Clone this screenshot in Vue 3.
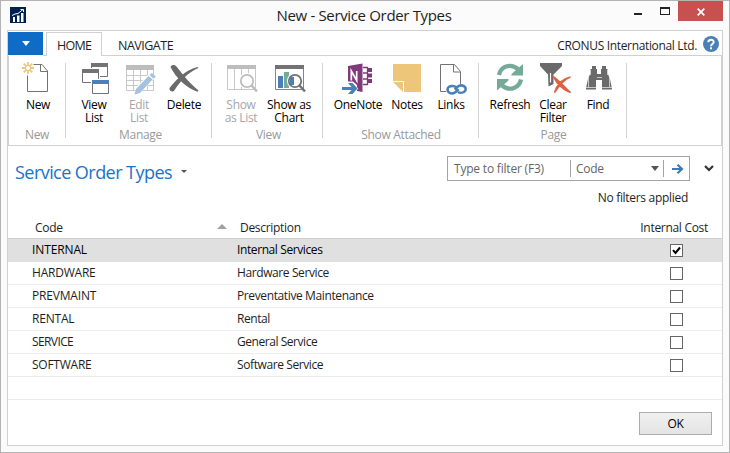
<script setup>
import { ref } from 'vue'

const rows = ref([
  { code: 'INTERNAL', description: 'Internal Services', internal: true, codeGap: -0.12, gap: -0.4 },
  { code: 'HARDWARE', description: 'Hardware Service', internal: false, codeGap: -0.22, gap: -0.4 },
  { code: 'PREVMAINT', description: 'Preventative Maintenance', internal: false, codeGap: -0.18, gap: -0.38 },
  { code: 'RENTAL', description: 'Rental', internal: false, codeGap: -0.2, gap: -0.45 },
  { code: 'SERVICE', description: 'General Service', internal: false, codeGap: -0.6, gap: -0.45 },
  { code: 'SOFTWARE', description: 'Software Service', internal: false, codeGap: -0.25, gap: -0.4 },
])
</script>

<template>
  <div class="window">
    <header class="titlebar">
      <svg class="app-icon" viewBox="0 0 16 16" width="16" height="16">
        <rect width="16" height="16" fill="#00204f" />
        <path d="M3 10h2v5H3zM7 8.500h2.500v6.500H7zM11 6h2.500v9H11z" fill="#fff" />
        <path d="M2 8.500L5 7l3-.5L13 2.500M10.500 2.500H13.500V5" fill="none" stroke="#fff" stroke-width="1" />
      </svg>
      <h1 class="window-title">New - Service Order Types</h1>
      <div class="controls">
        <svg class="min-max" viewBox="622 1 56 20" width="56" height="20">
          <rect x="634" y="13" width="8" height="2" fill="#222" />
          <path d="M660 7h10v8h-10zM661 9v5h8V9z" fill="#222" fill-rule="evenodd" />
        </svg>
        <button class="close">
          <svg viewBox="0 0 8 8" width="8" height="8"><path d="M.7.700l6.600 6.600M7.300.7L.7 7.300" stroke="#fff" stroke-width="1.700" /></svg>
        </button>
      </div>
    </header>

    <main class="panel">
      <nav class="tabs">
        <button class="file-tab"><i class="caret"></i></button>
        <span class="tab-gap"></span>
        <span class="tab active"><b class="t-home">HOME</b></span>
        <span class="tab rest">
          <b class="t-nav">NAVIGATE</b>
          <span class="company">CRONUS International Ltd.</span>
          <svg class="help" viewBox="0 0 16 16" width="16" height="16">
            <circle cx="8" cy="8" r="8" fill="#4a7fb8" />
            <path d="M5.300 6.200C5.300 2.900 10.700 2.900 10.700 6.100C10.700 7.900 8 8 8 10.200" fill="none" stroke="#fff" stroke-width="2" />
            <rect x="7" y="11.300" width="2" height="2" fill="#fff" />
          </svg>
        </span>
      </nav>

      <section class="ribbon">
        <div class="group g-new">
          <div class="buttons">
            <button class="tool w48">
              <svg viewBox="21 61 34 34">
                <path d="M33.500 64.500H42L47.500 71V91.500H27.500V75.500" fill="none" stroke="#737373" />
                <path d="M40.500 64.500V71.500H47.500" fill="none" stroke="#737373" />
                <g stroke="#edc67a" stroke-width="1.800"><path d="M28 62v3.500M28 70.500V74M22 68h3.500M30.500 68H34M23.700 63.700l2.500 2.500M29.800 69.800l2.500 2.500M32.300 63.700l-2.500 2.500M26.200 69.800l-2.500 2.500" /></g>
                <circle cx="28" cy="68" r="2.600" fill="none" stroke="#edc67a" stroke-width="1.200" />
              </svg>
              <span>New</span>
            </button>
          </div>
          <span class="group-label">New</span>
        </div>
        <div class="group g-manage">
          <div class="buttons">
            <button class="tool w44">
              <svg viewBox="77 61 34 34">
                <path d="M91.500 63.500h16v13h-16z" fill="#fff" stroke="#737373" /><path d="M91 63h17v4H91z" fill="#737373" />
                <path d="M81 68h19v16H81z" fill="#fff" />
                <path d="M82.500 69.500h16v13h-16z" fill="#fff" stroke="#737373" /><path d="M82 69h17v4H82z" fill="#737373" />
                <path d="M91 79h19v16H91z" fill="#fff" />
                <path d="M92.500 80.500h16v13h-16z" fill="#fff" stroke="#737373" /><path d="M92 80h17v4H92z" fill="#4a7fb8" />
              </svg>
              <span>View<br>List</span>
            </button>
            <button class="tool w46 disabled">
              <svg viewBox="122 61 34 34">
                <path d="M126 65h28v5h-28z" fill="#bdbdbd" />
                <path d="M126.500 70v20.500h27V70M126.500 75.500h27M126.500 80.500h27M126.500 85.500h27M133.500 70v20M140.500 70v20M147.500 70v20" fill="none" stroke="#c8c8c8" />
                <path d="M134 95l2.500-8 14-14.500 5.500 4.500-14.500 14.500z" fill="#fff" />
                <path d="M134.500 94.500l1.500-5.500 12.500-13 4 3.500-12.500 13.500zM149.500 75l2.300-2 4 3.500-2.300 2.200z" fill="#a4c1e0" />
              </svg>
              <span>Edit<br>List</span>
            </button>
            <button class="tool w44">
              <svg viewBox="167 61 34 34">
                <path d="M170.500 67C172 64.500 174.500 64.500 176.500 66.500C181 72 187 81 198.500 90.500L197.500 91.800C186 87.500 176 78 170.500 67Z" fill="#6a6a6a" />
                <path d="M198.500 68C188 72.500 181 80 174 91C171.500 92.200 169 90.500 169.500 88C175 81 185 70 197.500 67Z" fill="#6a6a6a" />
              </svg>
              <span>Delete</span>
            </button>
          </div>
          <span class="group-label">Manage</span>
        </div>
        <div class="group g-view">
          <div class="buttons">
            <button class="tool w46 disabled">
              <svg viewBox="224 61 34 34">
                <path d="M227 65h29v4h-29z" fill="#bdbdbd" />
                <path d="M227.500 69v20.500h28V69M234.500 69v20M241.500 69v20M248.500 69v20" fill="none" stroke="#c8c8c8" />
                <circle cx="247" cy="81" r="8" fill="#fff" />
                <circle cx="247" cy="81" r="6.200" fill="#fff" stroke="#bdbdbd" stroke-width="1.800" />
                <path d="M251.500 85.500l5.500 6" stroke="#bdbdbd" stroke-width="2.500" />
              </svg>
              <span>Show<br>as List</span>
            </button>
            <button class="tool w50">
              <svg viewBox="272 61 34 34">
                <path d="M275 65h29v4h-29z" fill="#737373" />
                <path d="M275.500 69v20.500h28V69" fill="none" stroke="#858585" />
                <path d="M278 76h5v12h-5z" fill="#4a7fb8" /><path d="M284 72h5v16h-5z" fill="#75aa98" />
                <circle cx="295" cy="81" r="8" fill="#fff" /><path d="M290 77h4v8h-4z" fill="#4a7fb8" />
                <circle cx="295" cy="81" r="6.200" fill="none" stroke="#737373" stroke-width="1.800" />
                <path d="M299.500 85.500l5.500 6" stroke="#737373" stroke-width="2.500" />
              </svg>
              <span>Show as<br>Chart</span>
            </button>
          </div>
          <span class="group-label">View</span>
        </div>
        <div class="group g-attached">
          <div class="buttons">
            <button class="tool w58">
              <svg viewBox="341 61 34 34">
                <path d="M348 66l14.500-2.500V92L357 91V85l-4-3.500h-5z" fill="#80397b" />
                <path d="M351.300 80.500V71l5.400 9.500V71" fill="none" stroke="#fff" stroke-width="1.700" />
                <path d="M363 67.500h4.500v17H363M363 73h4M363 79h4" fill="none" stroke="#80397b" stroke-width="1.300" />
                <path d="M368 68h4v4h-4zM368 73.500h4v4h-4zM368 79h4v4h-4z" fill="#80397b" />
                <path d="M342 87h9.500l-3.500-4h4.500l5 5.500-5 5.500H348l3.500-4H342z" fill="#4a7fb8" stroke="#fff" stroke-width="1.200" paint-order="stroke" />
              </svg>
              <span>OneNote</span>
            </button>
            <button class="tool w40">
              <svg viewBox="390 61 34 34">
                <path d="M393 64h28v28h-17V81h-11z" fill="#edc67a" /><path d="M393 82h10v10z" fill="#edc67a" />
              </svg>
              <span>Notes</span>
            </button>
            <button class="tool w48">
              <svg viewBox="434 61 34 34">
                <path d="M446 91.500h-5.500v-27h14l6 7V84" fill="none" stroke="#737373" /><path d="M453.500 64.500v7.500h7" fill="none" stroke="#737373" />
                <g fill="none" stroke="#4a7fb8" stroke-width="2.600"><path d="M456 87c-1.500-1.200-5-1.500-7-.2c-2 1.500-2 4.500 0 5.700c2 1.300 5 1 7-.8l2.500-2.700" /><path d="M458 92c1.500 1 4.500 1 6.200-.2c2-1.500 2-4.200 0-5.500c-2-1.300-5-1-7 .7l-2.500 2.500" /></g>
              </svg>
              <span>Links</span>
            </button>
          </div>
          <span class="group-label">Show Attached</span>
        </div>
        <div class="group g-page">
          <div class="buttons">
            <button class="tool w48">
              <svg viewBox="493 61 34 34">
                <path d="M499 75C500.500 67 510 62.500 518 69" fill="none" stroke="#75aa98" stroke-width="4.200" />
                <path d="M523 64V75.500H511.500V74z" fill="#75aa98" />
                <path d="M521 79.500C519.500 87.500 510 92 502 85.500" fill="none" stroke="#75aa98" stroke-width="4.200" />
                <path d="M497 90.500V79H508.500V80.500z" fill="#75aa98" />
              </svg>
              <span>Refresh</span>
            </button>
            <button class="tool w38">
              <svg viewBox="536 61 34 34">
                <path d="M540 63h22v3l-8.500 8.500V84l-5 2.500-.5-12L540 66z" fill="#6a6a6a" /><path d="M550.500 73v9.500" stroke="#fff" stroke-width="1.200" />
                <path d="M553.500 77c4 2 10 9 17 15.500C563 90 557 84 553.500 77ZM570.500 77c-6 2-11 8-16 15.500C556 86 562 79 570.500 77Z" fill="#dc6243" stroke="#dc6243" stroke-width="1.500" />
              </svg>
              <span>Clear<br>Filter</span>
            </button>
            <button class="tool w52">
              <svg viewBox="581 61 34 34">
                <path d="M592 66h4v3h1v5h4v-5h1v-3h4v3h1.500v4l2.500 6 2 10v.5h-10V80h-6v9.500h-10V88l2-9 2.500-6v-4h1.500z" fill="#6a6a6a" />
                <path d="M588.500 77v10M609.500 77v10M590.500 70v5M607.500 70v5M586 87.500h10M602 87.500h10M597 77.500h5" stroke="#e0e0e0" stroke-width=".8" />
              </svg>
              <span>Find</span>
            </button>
          </div>
          <span class="group-label">Page</span>
        </div>
      </section>

      <section class="heading">
        <h2>Service Order Types</h2>
        <i class="title-caret"></i>
        <div class="filter">
          <span class="placeholder">Type to filter (F3)</span>
          <span class="field">Code <i class="caret dark"></i></span>
          <span class="go">
            <svg viewBox="0 0 12 10" width="12" height="10"><path d="M0 5h9M5.500.8L10 5l-4.500 4.200" fill="none" stroke="#4179b5" stroke-width="2.200" /></svg>
          </span>
        </div>
        <svg class="chevron" viewBox="0 0 10 7" width="10" height="7"><path d="M1 1l4 4 4-4" fill="none" stroke="#333" stroke-width="2.200" /></svg>
      </section>
      <p class="status"><span>No filters applied</span></p>

      <section class="table">
        <div class="row head">
          <span class="cell code">Code <i class="sort"></i></span>
          <span class="cell desc">Description</span>
          <span class="cell cost">Internal Cost</span>
        </div>
        <div v-for="(row, i) in rows" :key="row.code" class="row" :class="{ selected: i === 0 }">
          <span class="cell code" :style="{ letterSpacing: row.codeGap + 'px' }">{{ row.code }}</span>
          <span class="cell desc" :style="{ letterSpacing: row.gap + 'px' }">{{ row.description }}</span>
          <span class="cell cost">
            <span class="box"><svg v-if="row.internal" viewBox="0 0 11 11" width="11" height="11"><path d="M2 5.200l2.500 2.800L9 2.500" fill="none" stroke="#000" stroke-width="2" /></svg></span>
          </span>
        </div>
        <div class="row"></div>
      </section>

      <footer><button class="ok">OK</button></footer>
    </main>
  </div>
</template>

<style>
body { overflow: hidden; }
</style>

<style scoped>
* { box-sizing: border-box; }
.window {
  width: 730px; height: 453px; border: 1px solid #b4b4b4; background: #fbfbfb;
  padding: 0 6px; font: 12px/16px "Open Sans", "Noto Sans", sans-serif; color: #1e1e1e; letter-spacing: -0.3px;
}
button { font: inherit; letter-spacing: inherit; color: inherit; border: 0; background: none; padding: 0; margin: 0; }
h1, h2, p { margin: 0; font-weight: 400; }
b { font-weight: 400; }
.titlebar { height: 29px; display: grid; grid-template-columns: 61px 1fr 101px; align-items: start; }
.app-icon { margin: 6px 0 0 3px; }
.window-title { text-align: center; font-size: 15px; line-height: 28px; letter-spacing: -0.34px; margin-left: 33px; margin-right: -5px; }
.controls { display: flex; justify-content: flex-end; }
.min-max { flex: none; }
.close { width: 45px; height: 20px; background: #c75050; display: flex; align-items: center; justify-content: center; flex: none; }
.close svg { margin-top: 1px; }
.panel { height: 416px; border: 1px solid #d0d0d0; background: #fff; display: flex; flex-direction: column; }
.tabs { height: 25px; display: flex; flex: none; font-size: 12.500px; }
.file-tab { width: 35px; height: 23px; margin-top: 1px; background: #0f6cc6; display: flex; align-items: center; justify-content: center; }
.caret { width: 0; height: 0; border: 4px solid transparent; border-top: 5px solid #fff; border-bottom: 0; }
.caret.dark { border-top-color: #555; margin-right: 4px; }
.tab-gap { width: 3px; border-bottom: 1px solid #d0d0d0; }
.tab { display: flex; align-items: center; }
.tab.active { width: 56px; margin-top: 1px; border: 1px solid #d0d0d0; border-bottom: 0; padding: 2px 0 0 10px; }
.tab.rest { flex: 1; border-bottom: 1px solid #d0d0d0; padding: 5px 3px 0 16px; }
.t-home { letter-spacing: -0.7px; }
.t-nav { letter-spacing: -0.5px; }
.company { margin-left: auto; margin-right: 6px; font-size: 12px; letter-spacing: -0.34px; }
.help { margin-top: -3px; }
.ribbon { height: 90px; flex: none; display: flex; border: 1px solid #d0d0d0; border-top: 0; padding-top: 5px; }
.group { height: 78px; display: flex; flex-direction: column; position: relative; padding-left: 6px; }
.group::after { content: ""; position: absolute; right: 0; top: 2px; width: 1px; height: 75px; background: #d2d2d2; }
.g-new { width: 57px; padding-left: 5px; }
.g-manage { width: 146px; }
.g-view { width: 111px; }
.g-attached { width: 156px; }
.g-page { width: 148px; padding-left: 7px; }
.buttons { display: flex; height: 66px; flex: none; }
.tool { display: flex; flex-direction: column; align-items: center; justify-content: flex-start; line-height: 13px; color: #000; text-align: center; white-space: nowrap; }
.tool svg { width: 34px; height: 34px; flex: none; margin-bottom: 3px; overflow: visible; }
.disabled { color: #a6a6a6; }
.w38 { width: 38px; } .w40 { width: 40px; } .w44 { width: 44px; } .w46 { width: 46px; } .w48 { width: 48px; }
.w50 { width: 50px; } .w52 { width: 52px; } .w58 { width: 58px; }
.group-label { color: #999; text-align: center; line-height: 16px; margin-right: 6px; }
.g-manage .group-label { margin-right: 3px; }
.g-view .group-label { margin-right: 4px; }
.heading { display: flex; height: 39px; flex: none; padding: 10px 8px 0 7px; }
h2 { font-size: 18px; line-height: 32px; color: #1a73c8; letter-spacing: -0.55px; }
.title-caret { border: 3px solid transparent; border-top-color: #555; border-bottom: 0; height: 0; margin: 14px 0 0 9px; }
.filter { width: 243px; height: 25px; border: 1px solid #a3a3a3; margin-left: auto; display: flex; align-items: center; color: #666; }
.placeholder { width: 122px; padding-left: 6px; letter-spacing: -0.2px; }
.field { width: 94px; height: 17px; border: solid #a3a3a3; border-width: 0 1px; padding-left: 5px; display: flex; justify-content: space-between; align-items: center; }
.go { display: flex; padding-left: 8px; }
.chevron { margin: 9px 0 0 14px; }
.status { height: 30px; text-align: right; padding: 5px 34px 0 0; }
.row { height: 23px; display: grid; grid-template-columns: 229px 1fr 90px; border-bottom: 1px solid #ececec; line-height: 22px; color: #1e1e1e; }
.row.head { height: 24px; border-color: #cfcfcf; line-height: 25px; }
.row.selected { background: #e0e0e0; border-color: #e0e0e0; color: #000; }
.cell.code { padding-left: 24px; }
.head .code { padding: 0 11px 0 27px; display: flex; justify-content: space-between; align-items: center; }
.sort { width: 0; height: 0; border: 5px solid transparent; border-top: 0; border-bottom-color: #a0a0a0; margin-right: -1px; margin-top: -3px; }
.head .desc { padding-left: 3px; }
.head .cost { text-align: right; padding-right: 14px; }
.box { display: block; width: 13px; height: 13px; margin: 5px 0 0 38px; border: 1px solid #666; background: #fff; }
.box svg { display: block; }
footer { display: flex; justify-content: flex-end; padding: 12px 10px 0; }
.ok { width: 73px; height: 23px; border: 1px solid #acacac; background: linear-gradient(#f0f0f0, #e4e4e4); color: #000; }
</style>
